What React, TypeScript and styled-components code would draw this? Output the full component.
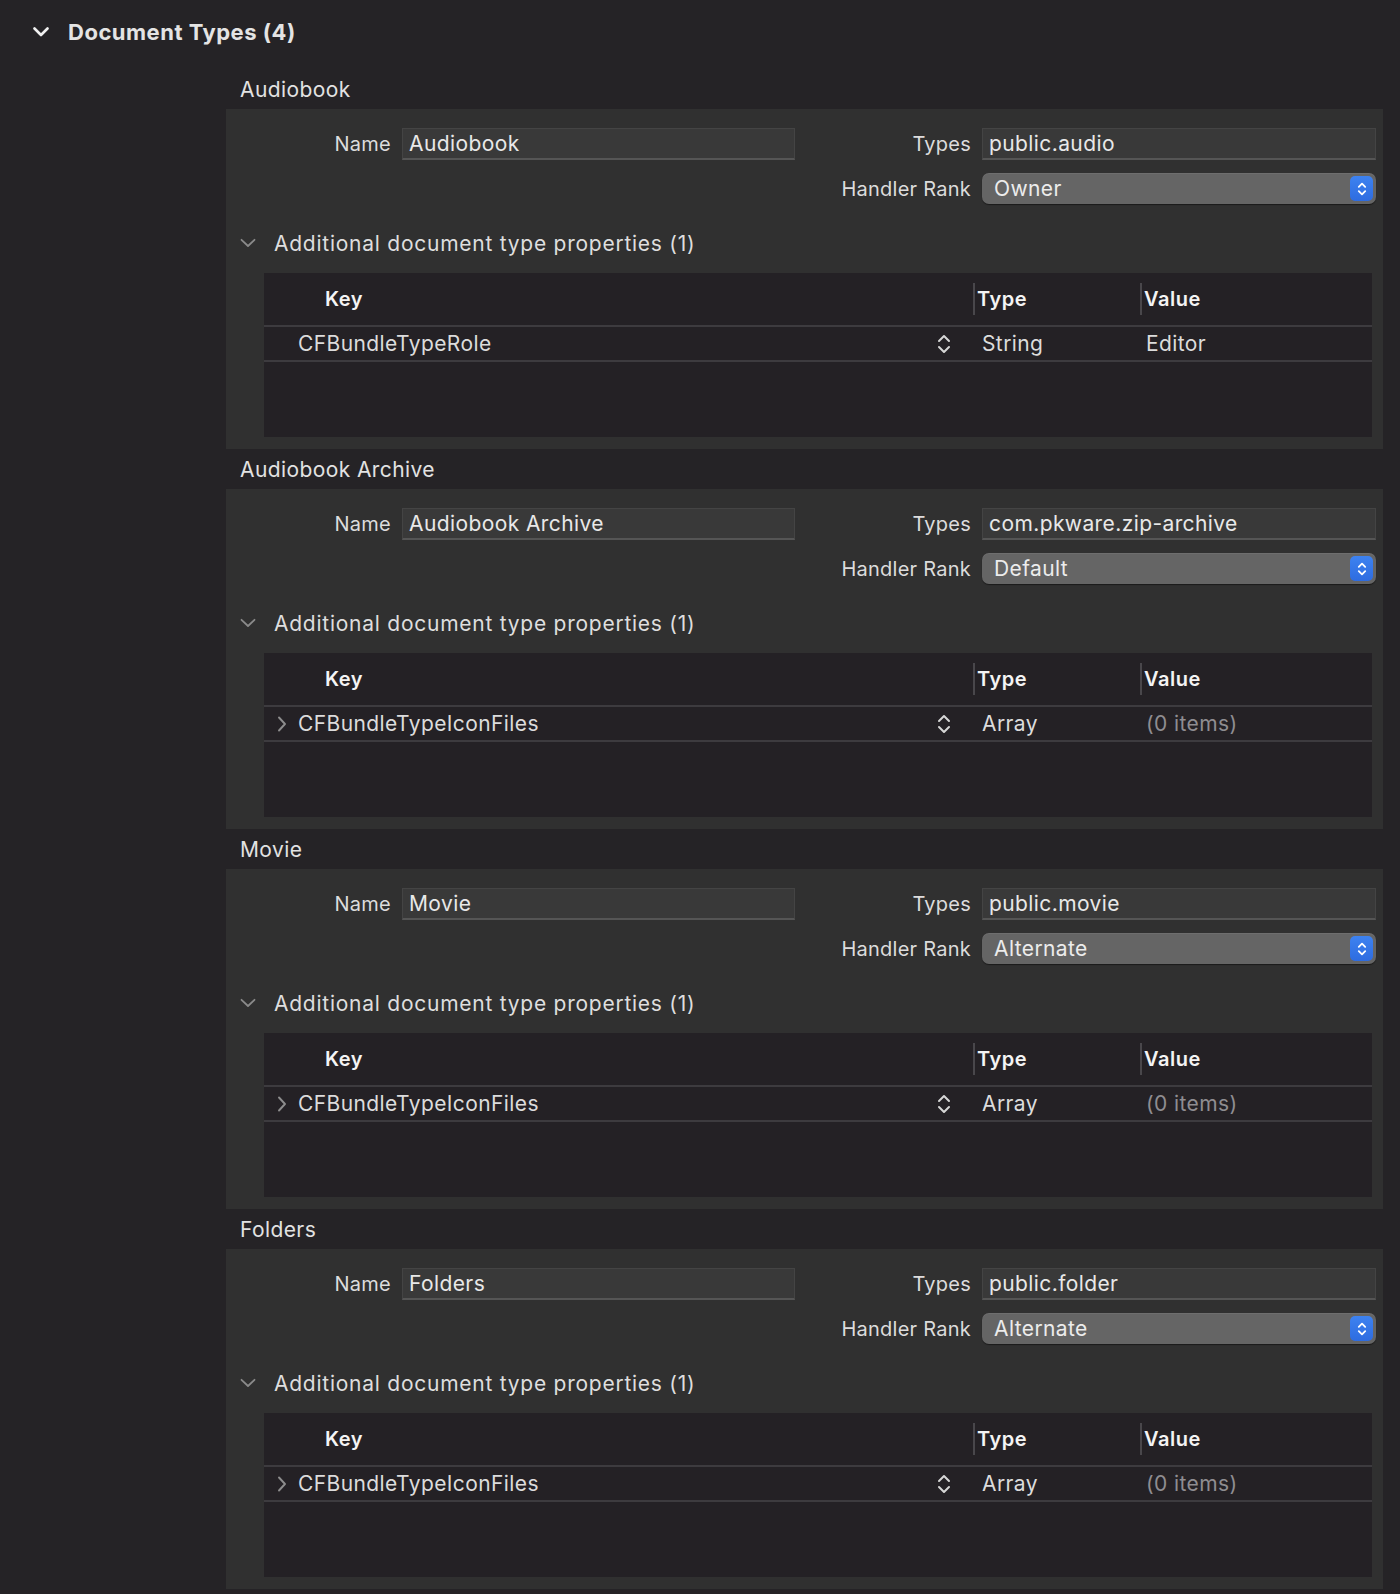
import React from 'react';
import styled, { createGlobalStyle } from 'styled-components';

const GlobalStyle = createGlobalStyle`
  html, body {
    margin: 0;
    padding: 0;
    background: #252326;
  }
  body {
    font-family: Inter, "Noto Sans", "Liberation Sans", sans-serif;
    -webkit-font-smoothing: antialiased;
  }
`;

const Page = styled.div`
  width: 1400px;
  min-height: 1594px;
  background: #252326;
  color: #e2e2e2;
  box-sizing: border-box;
`;

const GroupHeader = styled.div`
  display: flex;
  align-items: center;
  height: 69px;
  padding: 0 0 5px 33px;
  box-sizing: border-box;
  gap: 19px;
`;

const GroupTitle = styled.span`
  font-size: 22px;
  font-weight: 700;
  color: #e4e4e4;
  letter-spacing: 0.5px;
`;

const Types = styled.div`
  display: flex;
  flex-direction: column;
  padding-left: 226px;
  padding-right: 17px;
`;

const TypeTitle = styled.div`
  height: 40px;
  display: flex;
  align-items: center;
  padding-left: 14px;
  font-size: 21px;
  letter-spacing: 0.4px;
  color: #e2e2e2;
`;

const Panel = styled.div`
  background: #303030;
  padding: 19px 0 12px 0;
  display: flex;
  flex-direction: column;
`;

const FieldGrid = styled.div`
  display: grid;
  grid-template-columns: 165px 393px 165px 394px;
  column-gap: 11px;
  row-gap: 13px;
  align-items: center;
`;

const Label = styled.div<{ $col: number }>`
  grid-column: ${(p) => p.$col};
  text-align: right;
  font-size: 20px;
  letter-spacing: 0.25px;
  color: #dcdcdc;
  white-space: nowrap;
`;

const TextField = styled.div<{ $col: number }>`
  grid-column: ${(p) => p.$col};
  height: 32px;
  box-sizing: border-box;
  background: #393939;
  border: 1px solid #444;
  border-bottom: 2px solid #555;
  display: flex;
  align-items: center;
  padding-left: 6px;
  font-size: 21px;
  letter-spacing: 0.4px;
  color: #e8e8e8;
`;

const Popup = styled.div<{ $col: number }>`
  grid-column: ${(p) => p.$col};
  height: 31px;
  box-sizing: border-box;
  background: #656565;
  border-radius: 7px;
  box-shadow: 0 1px 1px rgba(0, 0, 0, 0.45), inset 0 1px 0 rgba(255, 255, 255, 0.06);
  display: flex;
  align-items: center;
  justify-content: space-between;
  padding: 0 3px 0 12px;
  font-size: 21px;
  letter-spacing: 0.4px;
  color: #ececec;
`;

const PopupButton = styled.span`
  width: 23px;
  height: 25px;
  border-radius: 5px;
  background: linear-gradient(#3d82f0, #2e6ce0);
  display: flex;
  align-items: center;
  justify-content: center;
`;

const Disclosure = styled.div`
  display: flex;
  align-items: center;
  height: 30px;
  margin-top: 24px;
  padding-left: 14px;
  gap: 18px;
  font-size: 21px;
  letter-spacing: 0.75px;
  color: #dedede;
`;

const Table = styled.div`
  margin: 15px 11px 0 38px;
  height: 164px;
  background: #242125;
  display: flex;
  flex-direction: column;
`;

const Row = styled.div<{ $header?: boolean }>`
  display: grid;
  grid-template-columns: 709px 167px 1fr;
  height: ${(p) => (p.$header ? '54px' : '35px')};
  box-sizing: border-box;
  border-bottom: 2px solid #3d3b3f;
  align-items: center;
  font-size: ${(p) => (p.$header ? '20px' : '21px')};
  letter-spacing: ${(p) => (p.$header ? '0.5px' : '0.4px')};
  font-weight: ${(p) => (p.$header ? 600 : 400)};
  color: ${(p) => (p.$header ? '#f4f4f4' : '#dcdcdc')};
`;

const HeadCell = styled.div<{ $sep?: boolean; $indent?: number }>`
  height: 32px;
  display: flex;
  align-items: center;
  padding-left: ${(p) => p.$indent ?? 2}px;
  border-left: ${(p) => (p.$sep ? '2px solid #49474b' : 'none')};
`;

const KeyCell = styled.div`
  display: flex;
  align-items: center;
  padding: 0 22px 0 13px;
`;

const KeyText = styled.span`
  flex: 1;
  padding-left: 11px;
`;

const Cell = styled.div<{ $muted?: boolean; $indent: number }>`
  padding-left: ${(p) => p.$indent}px;
  color: ${(p) => (p.$muted ? '#8f8d91' : '#dcdcdc')};
`;

const ChevronSpot = styled.span`
  width: 10px;
  display: inline-flex;
`;

const HeaderChevron = () => (
  <svg width="16" height="10" viewBox="0 0 16 10">
    <path d="M1.5 1.5 L8 8 L14.5 1.5" fill="none" stroke="#f0f0f0" strokeWidth="2.6" strokeLinecap="round" strokeLinejoin="round" />
  </svg>
);

const DownChevron = () => (
  <svg width="16" height="10" viewBox="0 0 16 10">
    <path d="M1.5 1.8 L8 8 L14.5 1.8" fill="none" stroke="#8a8a8a" strokeWidth="1.8" strokeLinecap="round" strokeLinejoin="round" />
  </svg>
);

const RightChevron = () => (
  <svg width="10" height="16" viewBox="0 0 10 16">
    <path d="M2 1.5 L8 8 L2 14.5" fill="none" stroke="#8d8d8d" strokeWidth="1.9" strokeLinecap="round" strokeLinejoin="round" />
  </svg>
);

const Stepper = () => (
  <svg width="14" height="22" viewBox="0 0 14 22">
    <path d="M2 8 L7 3 L12 8" fill="none" stroke="#d6d6d6" strokeWidth="2" strokeLinecap="round" strokeLinejoin="round" />
    <path d="M2 14 L7 19 L12 14" fill="none" stroke="#d6d6d6" strokeWidth="2" strokeLinecap="round" strokeLinejoin="round" />
  </svg>
);

const PopupArrows = () => (
  <svg width="10" height="16" viewBox="0 0 10 16">
    <path d="M1.8 5.8 L5 2.6 L8.2 5.8" fill="none" stroke="#fff" strokeWidth="1.8" strokeLinecap="round" strokeLinejoin="round" />
    <path d="M1.8 10.2 L5 13.4 L8.2 10.2" fill="none" stroke="#fff" strokeWidth="1.8" strokeLinecap="round" strokeLinejoin="round" />
  </svg>
);

type Property = { key: string; type: string; value: string; expandable?: boolean; muted?: boolean };

type DocType = {
  title: string;
  types: string;
  rank: string;
  property: Property;
};

const documentTypes: DocType[] = [
  { title: 'Audiobook', types: 'public.audio', rank: 'Owner', property: { key: 'CFBundleTypeRole', type: 'String', value: 'Editor' } },
  {
    title: 'Audiobook Archive',
    types: 'com.pkware.zip-archive',
    rank: 'Default',
    property: { key: 'CFBundleTypeIconFiles', type: 'Array', value: '(0 items)', expandable: true, muted: true },
  },
  {
    title: 'Movie',
    types: 'public.movie',
    rank: 'Alternate',
    property: { key: 'CFBundleTypeIconFiles', type: 'Array', value: '(0 items)', expandable: true, muted: true },
  },
  {
    title: 'Folders',
    types: 'public.folder',
    rank: 'Alternate',
    property: { key: 'CFBundleTypeIconFiles', type: 'Array', value: '(0 items)', expandable: true, muted: true },
  },
];

const DocumentType: React.FC<{ doc: DocType }> = ({ doc }) => (
  <>
    <TypeTitle>{doc.title}</TypeTitle>
    <Panel>
      <FieldGrid>
        <Label $col={1}>Name</Label>
        <TextField $col={2}>{doc.title}</TextField>
        <Label $col={3}>Types</Label>
        <TextField $col={4}>{doc.types}</TextField>
        <Label $col={3}>Handler Rank</Label>
        <Popup $col={4}>
          {doc.rank}
          <PopupButton>
            <PopupArrows />
          </PopupButton>
        </Popup>
      </FieldGrid>
      <Disclosure>
        <DownChevron />
        Additional document type properties (1)
      </Disclosure>
      <Table>
        <Row $header>
          <HeadCell $indent={61}>Key</HeadCell>
          <HeadCell $sep>Type</HeadCell>
          <HeadCell $sep>Value</HeadCell>
        </Row>
        <Row>
          <KeyCell>
            <ChevronSpot>{doc.property.expandable && <RightChevron />}</ChevronSpot>
            <KeyText>{doc.property.key}</KeyText>
            <Stepper />
          </KeyCell>
          <Cell $indent={9}>{doc.property.type}</Cell>
          <Cell $indent={6} $muted={doc.property.muted}>
            {doc.property.value}
          </Cell>
        </Row>
      </Table>
    </Panel>
  </>
);

const App: React.FC = () => (
  <Page>
    <GlobalStyle />
    <GroupHeader>
      <HeaderChevron />
      <GroupTitle>Document Types (4)</GroupTitle>
    </GroupHeader>
    <Types>
      {documentTypes.map((doc) => (
        <DocumentType key={doc.title} doc={doc} />
      ))}
    </Types>
  </Page>
);

export default App;
